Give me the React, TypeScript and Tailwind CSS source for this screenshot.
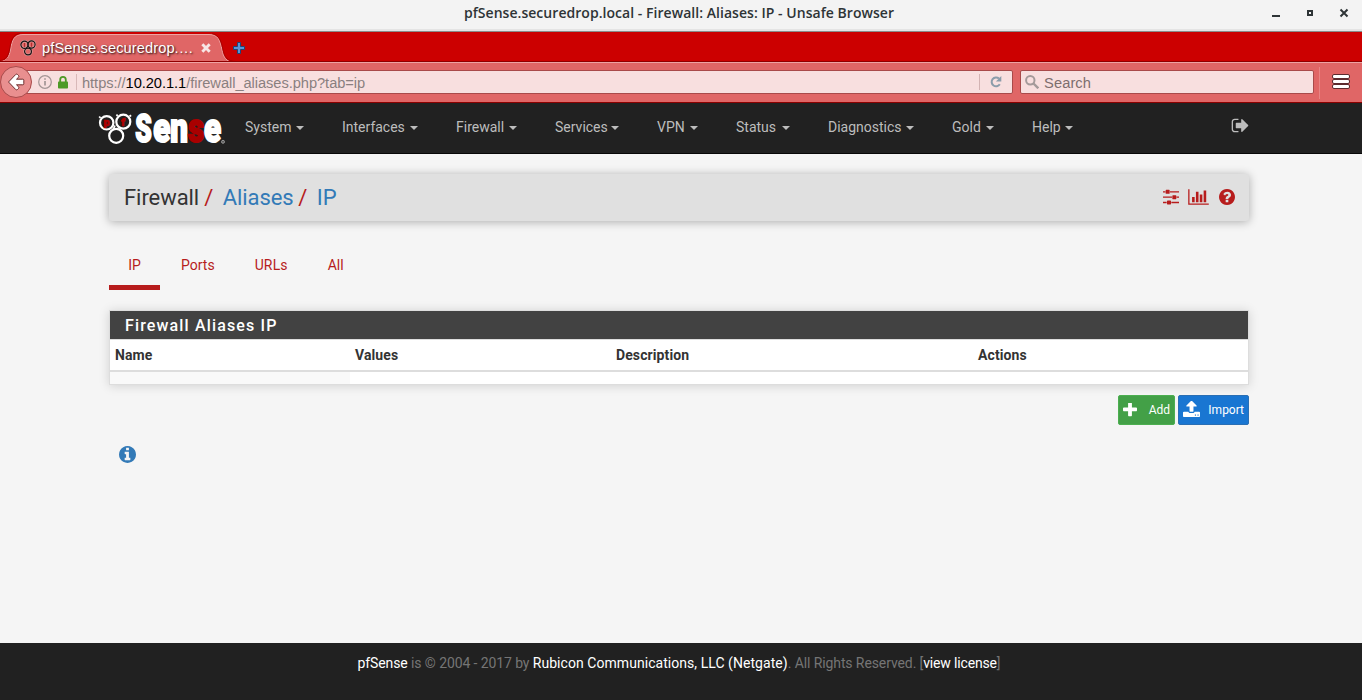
import React from 'react';

const PATHS = {
  question:
    'M1024 1376v-192q0-14-9-23t-23-9h-192q-14 0-23 9t-9 23v192q0 14 9 23t23 9h192q14 0 23-9t9-23zm256-672q0-88-55.5-163t-138.5-116-170-41q-243 0-371 213-15 24 8 42l132 100q7 6 19 6 16 0 25-12 53-68 86-92 34-24 86-24 48 0 85.5 26t37.5 59q0 38-20 61t-68 45q-63 28-115.5 86.5t-52.5 125.5v36q0 14 9 23t23 9h192q14 0 23-9t9-23q0-19 21.5-49.5t54.5-49.5q32-18 49-28.5t46-35 44.5-48 28-60.5 12.5-81zm384 192q0 209-103 385.5t-279.5 279.5-385.5 103-385.5-103-279.5-279.5-103-385.5 103-385.5 279.5-279.5 385.5-103 385.5 103 279.5 279.5 103 385.5z',
  info:
    'M1152 1376v-160q0-14-9-23t-23-9h-96v-512q0-14-9-23t-23-9h-320q-14 0-23 9t-9 23v160q0 14 9 23t23 9h96v320h-96q-14 0-23 9t-9 23v160q0 14 9 23t23 9h448q14 0 23-9t9-23zm-128-896v-160q0-14-9-23t-23-9h-192q-14 0-23 9t-9 23v160q0 14 9 23t23 9h192q14 0 23-9t9-23zm640 416q0 209-103 385.5t-279.5 279.5-385.5 103-385.5-103-279.5-279.5-103-385.5 103-385.5 279.5-279.5 385.5-103 385.5 103 279.5 279.5 103 385.5z',
  sliders:
    'M352 1425v128h-352v-128h352zm352-128q26 0 45 19t19 45v256q0 26-19 45t-45 19h-256q-26 0-45-19t-19-45v-256q0-26 19-45t45-19h256zm160-384v128h-864v-128h864zm-640-512v128h-224v-128h224zm1312 1024v128h-736v-128h736zm-960-1152q26 0 45 19t19 45v256q0 26-19 45t-45 19h-256q-26 0-45-19t-19-45v-256q0-26 19-45t45-19h256zm640 512q26 0 45 19t19 45v256q0 26-19 45t-45 19h-256q-26 0-45-19t-19-45v-256q0-26 19-45t45-19h256zm320 128v128h-224v-128h224zm0-512v128h-864v-128h864z',
  chart:
    'M640 896v512h-256v-512h256zm384-512v1024h-256v-1024h256zm1024 1152v128h-2048v-1536h128v1408h1920zm-640-896v768h-256v-768h256zm384-384v1152h-256v-1152h256z',
  signOut:
    'M704 1440q0 4 1 20t.5 26.5-3 23.5-10 19.5-20.5 6.5h-320q-119 0-203.5-84.5t-84.5-203.5v-704q0-119 84.5-203.5t203.5-84.5h320q13 0 22.5 9.5t9.5 22.5q0 4 1 20t.5 26.5-3 23.5-10 19.5-20.5 6.5h-320q-66 0-113 47t-47 113v704q0 66 47 113t113 47h312l11.5 1 11.5 3 8 5.500 7 9 2 13.500zm928-544q0 26-19 45l-544 544q-19 19-45 19t-45-19-19-45v-288h-448q-26 0-45-19t-19-45v-384q0-26 19-45t45-19h448v-288q0-26 19-45t45-19 45 19l544 544q19 19 19 45z',
  upload:
    'M1344 1472q0-26-19-45t-45-19-45 19-19 45 19 45 45 19 45-19 19-45zm256 0q0-26-19-45t-45-19-45 19-19 45 19 45 45 19 45-19 19-45zm128-224v320q0 40-28 68t-68 28h-1472q-40 0-68-28t-28-68v-320q0-40 28-68t68-28h427q21 56 70.5 92t110.5 36h256q61 0 110.5-36t70.5-92h427q40 0 68 28t28 68zm-325-648q-17 40-59 40h-256v448q0 26-19 45t-45 19h-256q-26 0-45-19t-19-45v-448h-256q-42 0-59-40-17-39 14-69l448-448q18-19 45-19t45 19l448 448q31 30 14 69z',
  plus:
    'M1600 736v192q0 40-28 68t-68 28h-416v416q0 40-28 68t-68 28h-192q-40 0-68-28t-28-68v-416h-416q-40 0-68-28t-28-68v-192q0-40 28-68t68-28h416v-416q0-40 28-68t68-28h192q40 0 68 28t28 68v416h416q40 0 68 28t28 68z',
};

function Icon({ d, box, className }: { d: string; box: string; className: string }) {
  return (
    <svg viewBox={box} className={className} fill="currentColor">
      <path d={d} />
    </svg>
  );
}

function TitleBar() {
  return (
    <div className="flex h-8 items-start border-b border-[#8a8c8a] bg-[#f3f3f3] text-[#2e3436] shadow-[inset_0_-2px_0_#e4e4e4]">
      <div className="w-[116px]" />
      <div className="flex-1 pt-[3px] text-center font-['Open_Sans','Noto_Sans',sans-serif] text-[14px] font-semibold leading-5 tracking-[0.04px]">
        <span>pfSense.securedrop.local - Firewall: Aliases: IP - Unsafe Browser</span>
      </div>
      <svg className="h-[30px] w-[120px]" viewBox="0 0 120 30">
        <rect x="30" y="15" width="8" height="2" fill="#2e3436" />
        <rect x="66" y="11" width="4" height="4" fill="none" stroke="#2e3436" strokeWidth="2" />
        <path d="M98.5 9.5l7 7M105.500 9.500l-7 7" stroke="#2e3436" strokeWidth="2" />
      </svg>
    </div>
  );
}

function TabStrip() {
  return (
    <div className="relative flex h-[30px] bg-[#cc0000] text-white">
      <svg className="absolute left-0 top-0 h-[31px] w-[236px]" viewBox="0 0 236 31">
        <path
          d="M0 30C7 30 9 25 10.500 18C12 8 14 2.500 23 2.500H209C218 2.500 220 8 222 18C223.500 25 226 30 234 30V31H0z"
          fill="#e06666"
        />
        <path
          d="M0 29.500C7 29 9 25 10.500 18C12 8 14 2.500 23 2.500H209C218 2.500 220 8 222 18C223.500 25 226 30 234 30.500"
          fill="none"
          stroke="#eea6a6"
        />
        <path d="M0 28.500C6 28 8 24 9.500 18C11 8 13 2 20 1.500M212 1.500C219 3 221 8 223 18C224.500 25 227 29 236 29.500" fill="none" stroke="#9c0000" strokeOpacity=".75" />
      </svg>
      <div className="relative flex h-[30px] w-[222px] items-center pl-5 pt-[2px]">
        <svg className="size-4" viewBox="0 0 16 16" fill="none">
          <g stroke="#d8cccc" strokeWidth="2.400" strokeOpacity=".6">
            <circle cx="4.500" cy="4.800" r="3.600" />
            <circle cx="11.500" cy="4.500" r="3.600" />
            <circle cx="8" cy="11.500" r="3.400" />
          </g>
          <g stroke="#1b1111" strokeWidth="1.200">
            <circle cx="4.500" cy="4.800" r="3.600" />
            <circle cx="11.500" cy="4.500" r="3.600" />
            <circle cx="8" cy="11.500" r="3.400" />
          </g>
          <path d="M4.500 3v4M11.500 2.800v4" stroke="#b03030" />
        </svg>
        <span className="ml-1.5 w-[152px] whitespace-nowrap font-['Liberation_Sans',sans-serif] text-[14.67px] leading-5 tracking-[0.08px] [text-shadow:1px_1px_2px_rgba(0,0,0,.9)]">
          pfSense.securedrop.…
        </span>
        <svg className="ml-[7px] size-[10px]" viewBox="0 0 9 9">
          <path d="M1.200 1.200l6.600 6.600M7.800 1.200l-6.600 6.600" stroke="#f7e6e6" strokeWidth="2.600" />
        </svg>
      </div>
      <svg className="ml-[10px] mt-[9px] size-[14px]" viewBox="0 0 14 14">
        <path d="M5.500 1.500h3v4h4v3h-4v4h-3v-4h-4v-3h4z" fill="#5b94d6" stroke="#1f4478" />
      </svg>
    </div>
  );
}

function Toolbar() {
  return (
    <div className="relative flex h-[41px] border-b border-b-[#8b0000] border-t border-t-[#eea3a3] bg-[#e06666] font-['Liberation_Sans',sans-serif] text-[14.67px] shadow-[0_-1px_0_#8f0000]">
      <div className="ml-4 mt-[7px] flex h-6 w-[997px] items-center rounded-[2px] border border-[#a94a4a] bg-[#f8dfdf] pl-[21px]">
        <svg className="size-[14px]" viewBox="0 0 14 14" fill="none" stroke="#a39696">
          <circle cx="7" cy="7" r="6.300" strokeWidth="1.200" />
          <path d="M7 6v4.500M7 3.200v1.600" strokeWidth="1.700" />
        </svg>
        <svg className="ml-[6px] h-[13px] w-[10px]" viewBox="0 0 10 13">
          <rect y="5.500" width="10" height="7" rx=".8" fill="#4e9a27" />
          <path d="M2.200 6V3.700a2.800 2.800 0 0 1 5.600 0V6" fill="none" stroke="#4e9a27" strokeWidth="1.800" />
        </svg>
        <div className="ml-2 h-4 w-px bg-[#d9b8b8]" />
        <span className="ml-[5px] flex-1 pt-px tracking-[-0.055px] text-[#8a7f7f]">
          https://<span className="text-black">10.20.1.1</span>/firewall_aliases.php?tab=ip
        </span>
        <div className="h-4 w-px bg-[#d3b3b3]" />
        <svg className="ml-[10px] mr-[10px] size-3" viewBox="0 0 12 12">
          <path d="M9.800 8.200A4.400 4.400 0 1 1 9 2.600" fill="none" stroke="#8b9caa" strokeWidth="2" />
          <path d="M11.300 0v5.500H5.900z" fill="#8b9caa" />
        </svg>
      </div>
      <div className="ml-[7px] mt-[7px] flex h-6 w-[294px] items-center rounded-[2px] border border-[#a94a4a] bg-[#f8dfdf] pl-1">
        <svg className="mt-[-1px] size-[14px]" viewBox="0 0 14 14" fill="none" stroke="#a49a9a">
          <circle cx="5.300" cy="5.300" r="4.200" strokeWidth="2" />
          <path d="M8.500 8.500l4.800 4.800" strokeWidth="2.400" />
        </svg>
        <span className="ml-[5px] pt-px tracking-[0.1px] text-[#7d6e6e]">Search</span>
      </div>
      <div className="ml-[5px] mt-1 h-8 w-px bg-[#e88585]" />
      <svg className="ml-3 mt-[11px] h-[16px] w-[18px]" viewBox="0 0 18 16" fill="#fff" stroke="#5c2a2e">
        <rect x=".5" y=".5" width="17" height="4" rx="1.500" />
        <rect x=".5" y="5.500" width="17" height="4" rx="1.500" />
        <rect x=".5" y="10.500" width="17" height="4" rx="1.500" />
      </svg>
      <svg className="absolute left-0 top-[3px] size-8" viewBox="0 0 32 32">
        <circle cx="16" cy="16" r="15.500" fill="#e98f8f" stroke="#a84a4a" />
        <path
          d="M8.500 16l7.200-7.500q1-.8 1.800 0l1 1q.8 1-.2 2l-1.800 1.700h6.300q1 0 1 1v3.600q0 1-1 1h-6.300l1.800 1.700q1 1 .2 2l-1 1q-.8.800-1.800 0z"
          fill="#fff"
          stroke="#6d2c2c"
        />
      </svg>
    </div>
  );
}

function Logo() {
  return (
    <svg className="h-[50px] w-[128px] shrink-0" viewBox="98 103 128 50">
      <g fill="none" stroke="#fff" strokeWidth="2.200">
        <circle cx="106.700" cy="122.800" r="6.700" />
        <circle cx="123.300" cy="121.700" r="7" />
        <circle cx="116.200" cy="135.800" r="7" />
        <path d="M100.500 118l-1.300-1.500M129.500 116.500l1.600-1.300M117.500 116l-1-1.500M113 130l2-4.500" strokeWidth="1.800" />
      </g>
      <g fill="#b00000" stroke="#b00000" strokeWidth=".6" fontFamily="Roboto, sans-serif" fontWeight="900" fontSize="11">
        <text x="103.500" y="126">p</text>
        <text x="121" y="126">f</text>
      </g>
      <g fontFamily="Roboto, sans-serif" fontWeight="900" fill="#fff" stroke="#fff">
        <text x="135.200" y="142" fontSize="38" strokeWidth="2" textLength="16.500" lengthAdjust="spacingAndGlyphs">
          S
        </text>
        <text x="153.200" y="142" fontSize="40.500" strokeWidth="2" textLength="68" lengthAdjust="spacingAndGlyphs">
          en
          <tspan fill="#a90000" stroke="#a90000">s</tspan>e
        </text>
      </g>
      <circle cx="223" cy="141.800" r="1.500" fill="#555" stroke="#aaa" strokeWidth=".8" />
    </svg>
  );
}

const MENU = [
  { label: 'System', width: 'w-[59px]' },
  { label: 'Interfaces', width: 'w-[76px]' },
  { label: 'Firewall', width: 'w-[61px]' },
  { label: 'Services', width: 'w-[64px]' },
  { label: 'VPN', width: 'w-[41px]' },
  { label: 'Status', width: 'w-[54px]' },
  { label: 'Diagnostics', width: 'w-[86px]' },
  { label: 'Gold', width: 'w-[42px]' },
  { label: 'Help', width: 'w-[41px]' },
];

function NavBar() {
  return (
    <nav className="flex h-[51px] items-start border-b border-[#080808] bg-[#212121] pl-[98px] pr-[112px] text-[14px] text-[#bdbdbd]">
      <Logo />
      <ul className="ml-[19px] flex gap-[38px] pt-[14px] leading-5">
        {MENU.map(({ label, width }) => (
          <li key={label} className={`flex items-center justify-between whitespace-nowrap ${width}`}>
            {label}
            <span className="mt-px h-0 w-0 border-x-4 border-t-4 border-x-transparent border-t-[#bdbdbd]" />
          </li>
        ))}
      </ul>
      <Icon d={PATHS.signOut} box="0 0 1792 1792" className="ml-auto mt-[13px] size-[19px]" />
    </nav>
  );
}

function Breadcrumbs() {
  return (
    <header className="mt-5 flex h-[47px] items-center rounded-[3px] bg-[#e0e0e0] px-[15px] text-[22px] tracking-[-0.06px] text-[#337ab7] shadow-[0_1px_10px_rgba(0,0,0,.3)]">
      <span className="text-[#333]">Firewall</span>
      <span className="ml-[5px] text-[#b71c1c]">/</span>
      <span className="ml-[9.500px]">Aliases</span>
      <span className="ml-[4.500px] text-[#b71c1c]">/</span>
      <span className="ml-[9.500px]">IP</span>
      <div className="ml-auto flex items-center pb-px text-[#b71c1c]">
        <Icon d={PATHS.sliders} box="0 192 1536 1536" className="size-4" />
        <Icon d={PATHS.chart} box="0 0 2048 1792" className="ml-[9px] h-[18px] w-[21px]" />
        <Icon d={PATHS.question} box="128 128 1536 1536" className="ml-[10px] mr-[-1px] size-4" />
      </div>
    </header>
  );
}

function Tabs() {
  return (
    <ul className="mt-[29px] flex h-10 gap-[2px] text-[14px] leading-5 text-[#b71c1c]">
      <li className="w-[51px] border-b-[5px] border-[#b71c1c] pt-[5px] text-center">IP</li>
      <li className="px-[19px] pt-[5px]">Ports</li>
      <li className="px-[19px] pt-[5px] tracking-[0.15px]">URLs</li>
      <li className="px-[19px] pt-[5px]">All</li>
    </ul>
  );
}

function AliasTable() {
  return (
    <section className="mt-5 border border-[#ddd] bg-white text-[14px] shadow-[0_1px_10px_rgba(0,0,0,.15)]">
      <h2 className="h-[28px] bg-[#424242] pl-[15px] text-[16px] font-medium leading-[29px] tracking-[1.15px] text-white">
        Firewall Aliases IP
      </h2>
      <div className="grid h-[33px] grid-cols-[240px_261px_362px_1fr] border-b-2 border-t border-[#ddd] font-bold leading-[31px] tracking-[0.1px] text-[#333]">
        <span className="pl-[5px]">Name</span>
        <span className="pl-[5px]">Values</span>
        <span className="pl-[5px]">Description</span>
        <span className="pl-[5px]">Actions</span>
      </div>
      <div className="h-3">
        <div className="h-full w-[240px] bg-[#f9f9f9]" />
      </div>
    </section>
  );
}

export default function App() {
  return (
    <div className="flex h-[700px] w-[1362px] flex-col overflow-hidden bg-[#f5f5f5] font-[Roboto,sans-serif]">
      <TitleBar />
      <TabStrip />
      <Toolbar />
      <NavBar />
      <main className="ml-[109px] w-[1140px] flex-1">
        <Breadcrumbs />
        <Tabs />
        <AliasTable />
        <div className="mt-[10px] flex h-[30px] justify-end gap-[3px] text-[12px] text-white">
          <button className="flex w-[57px] items-center justify-between rounded-[2px] border border-[#4caf50] bg-[#43a047] px-1">
            <Icon d={PATHS.plus} box="192 192 1408 1408" className="size-[14px]" />
            Add
          </button>
          <button className="flex w-[71px] items-center justify-between rounded-[2px] border border-[#2a6fb4] bg-[#1976d2] px-1">
            <Icon d={PATHS.upload} box="64 96 1664 1664" className="mt-[-2px] size-[17px]" />
            Import
          </button>
        </div>
        <Icon d={PATHS.info} box="128 128 1536 1536" className="ml-[10px] mt-[21px] size-[17px] text-[#337ab7]" />
      </main>
      <footer className="flex h-[57px] justify-center bg-[#212121] pr-1 pt-[10px] text-[14px] leading-5 text-[#757575]">
        <p className="tracking-[-0.1px]">
          <span className="text-white">pfSense</span> is © 2004 - 2017 by{' '}
          <span className="tracking-[0.05px] text-white">Rubicon Communications, LLC (Netgate)</span>. All Rights Reserved. [
          <span className="tracking-[-0.16px] text-white">view license</span>]
        </p>
      </footer>
    </div>
  );
}
